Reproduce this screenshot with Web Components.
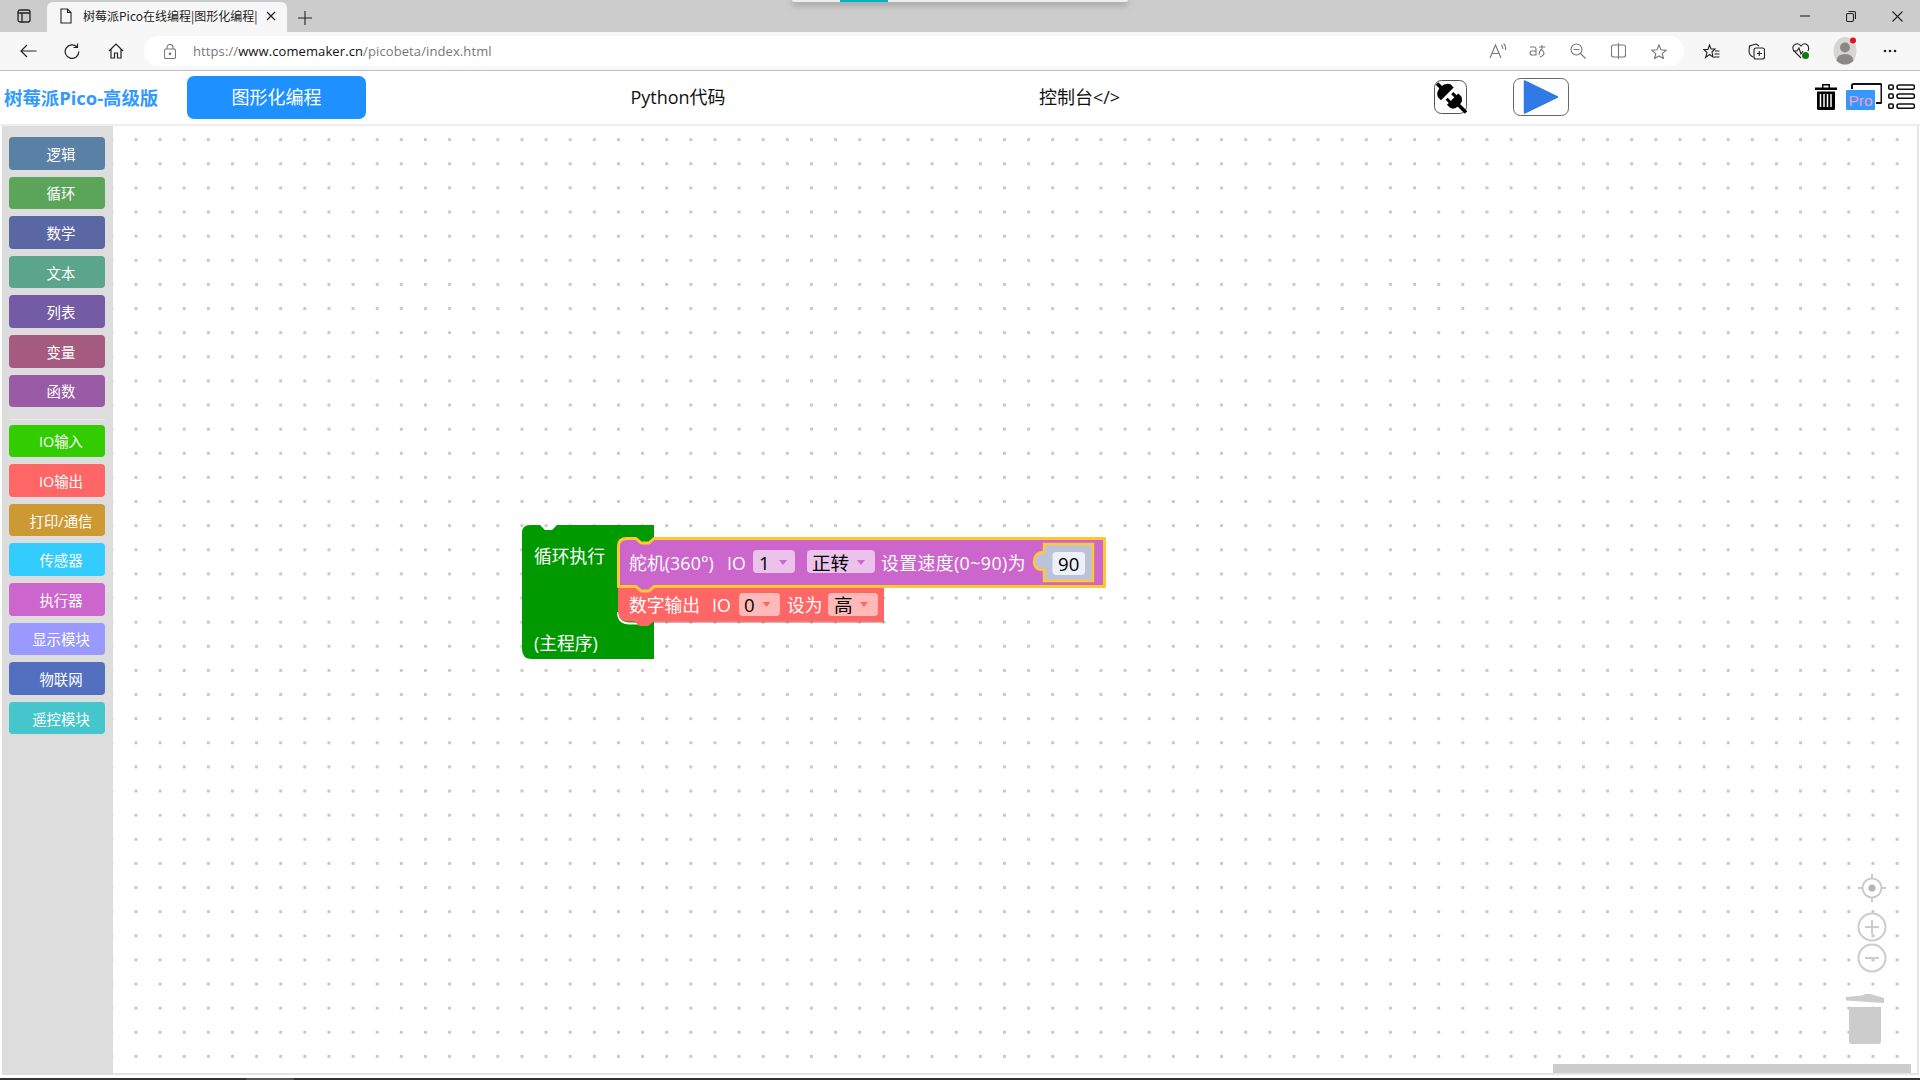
<!DOCTYPE html>
<html lang="zh-CN">
<head>
<meta charset="utf-8">
<title>树莓派Pico在线编程</title>
<style>
  html, body { margin: 0; padding: 0; height: 100%; background: #fff; overflow: hidden; }
  body { display: flex; flex-direction: column; width: 1920px; height: 1080px; font-family: "Open Sans", "Noto Sans CJK SC", sans-serif; }
  .workspace-row { display: flex; height: 949px; }
</style>
</head>
<body>
<browser-chrome></browser-chrome>
<app-header></app-header>
<div class="workspace-row">
  <toolbox-panel>
    <toolbox-item color="#5b80a5">逻辑</toolbox-item>
    <toolbox-item color="#5ba55b">循环</toolbox-item>
    <toolbox-item color="#5b67a5">数学</toolbox-item>
    <toolbox-item color="#5ba58c">文本</toolbox-item>
    <toolbox-item color="#745ba5">列表</toolbox-item>
    <toolbox-item color="#a55b80">变量</toolbox-item>
    <toolbox-item color="#995ba5">函数</toolbox-item>
    <toolbox-divider></toolbox-divider>
    <toolbox-item color="#33cc00">IO输入</toolbox-item>
    <toolbox-item color="#ff6666">IO输出</toolbox-item>
    <toolbox-item color="#cc9933">打印/通信</toolbox-item>
    <toolbox-item color="#33ccff">传感器</toolbox-item>
    <toolbox-item color="#cc66cc">执行器</toolbox-item>
    <toolbox-item color="#9999ff">显示模块</toolbox-item>
    <toolbox-item color="#5370c0">物联网</toolbox-item>
    <toolbox-item color="#45c5cc">遥控模块</toolbox-item>
  </toolbox-panel>
  <block-canvas>
    <block-stack></block-stack>
    <canvas-controls></canvas-controls>
  </block-canvas>
</div>
<task-bar></task-bar>

<script>
// Browser window frame: tab strip and address bar
class BrowserChrome extends HTMLElement {
    constructor() {
        super();
        this.attachShadow({ mode: 'open' });
        this.shadowRoot.innerHTML = `
            <style>
                :host { display: block; height: 71px; position: relative; font-family: "Open Sans", "Noto Sans CJK SC", sans-serif; flex: none; }
                svg { display: block; fill: none; stroke: #222; stroke-width: 1.1; flex: none; }
                .strip { height: 32px; background: #ccc; display: flex; align-items: flex-end; box-sizing: border-box; }
                .strip .side { width: 47px; height: 32px; display: flex; align-items: center; justify-content: center; }
                .tab { width: 240px; height: 30px; background: #f7f7f7; border-radius: 6px 6px 0 0; display: flex; align-items: center; box-sizing: border-box; padding: 0 0 3px 13px; }
                .tab span { width: 174px; margin-left: 11px; font-size: 12px; color: #222; white-space: nowrap; font-family: "Noto Sans CJK SC", sans-serif; }
                .tab .x { margin-left: 9px; }
                .plus { margin: 0 0 7px 11px; }
                .win { margin-left: auto; height: 32px; display: flex; align-items: center; }
                .win div { width: 46px; display: flex; justify-content: center; }
                .bar { height: 38px; background: #f7f7f7; border-bottom: 1px solid #c0c0c0; display: flex; align-items: center; }
                .nav { width: 44px; display: flex; justify-content: center; }
                .bar .first { margin-left: 6px; }
                .omni { width: 1540px; height: 30px; margin-left: 6px; background: #fff; border-radius: 15px; display: flex; align-items: center; box-sizing: border-box; padding-left: 20px; }
                .url { margin-left: 17px; font-size: 13px; color: #777; letter-spacing: .1px; }
                .url b { font-weight: 400; color: #111; }
                .right { margin-left: auto; display: flex; align-items: center; margin-right: 5px; }
                .right div { width: 40.3px; display: flex; justify-content: center; }
                .tools { display: flex; align-items: center; margin-left: 5px; }
                .tools div { width: 44.7px; display: flex; justify-content: center; }
                .gray { stroke: #777; }
                .flash { position: absolute; left: 792px; top: 0; width: 336px; height: 1.5px; background: #eee; box-shadow: 0 2px 6px rgba(0,0,0,.55); border-radius: 0 0 4px 4px; }
                .flash i { display: block; margin-left: 48px; width: 48px; height: 1.5px; background: #00b4c8; }
            </style>
            <div class="strip">
                <div class="side">
                    <svg width="14" height="14" viewBox="0 0 14 14"><rect x="1" y="1" width="12" height="12" rx="2" stroke-width="1.3"/><path d="M1 4H13M5 4V13" stroke-width="1.3"/></svg>
                </div>
                <div class="tab">
                    <svg width="12" height="16" viewBox="0 0 12 16"><path d="M1 1H7.5L11 4.5V15H1Z"/><path d="M7.5 1V4.5H11"/></svg>
                    <span>树莓派Pico在线编程|图形化编程|</span>
                    <svg class="x" width="10" height="10" viewBox="0 0 10 10"><path d="M1 1L9 9M9 1L1 9" stroke-width="1.3"/></svg>
                </div>
                <svg class="plus" width="14" height="14" viewBox="0 0 14 14"><path d="M7 0V14M0 7H14"/></svg>
                <div class="win">
                    <div><svg width="10" height="10" viewBox="0 0 10 10"><path d="M0 5H10"/></svg></div>
                    <div><svg width="10" height="11" viewBox="0 0 10 11"><rect x=".5" y="2.5" width="7" height="8" rx="1.5"/><path d="M2.5 .5H8Q9.5 .5 9.5 2V8"/></svg></div>
                    <div><svg width="11" height="11" viewBox="0 0 11 11"><path d="M.5 .5L10.5 10.5M10.5 .5L.5 10.5"/></svg></div>
                </div>
            </div>
            <div class="bar">
                <div class="nav first"><svg width="17" height="14" viewBox="0 0 17 14"><path d="M16.5 7H1M7 1L1 7L7 13" stroke-width="1.2"/></svg></div>
                <div class="nav"><svg width="16" height="16" viewBox="0 0 16 16"><path d="M13 4A6.8 6.8 0 1 0 14.8 8.5M13.5 .5V4.5H9.5" stroke-width="1.2"/></svg></div>
                <div class="nav"><svg width="16" height="16" viewBox="0 0 16 16"><path d="M1 8L8 1L15 8M3 6.5V15H6.5V10H9.5V15H13V6.5" stroke-width="1.2"/></svg></div>
                <div class="omni">
                    <svg class="gray" width="12" height="15" viewBox="0 0 12 15"><rect x=".5" y="5" width="11" height="9.5" rx="1.5"/><path d="M3 5V3.5A3 3 0 0 1 9 3.5V5"/><circle cx="6" cy="9.8" r=".8" fill="#777"/></svg>
                    <div class="url">https://<b>www.comemaker.cn</b>/picobeta/index.html</div>
                    <div class="right">
                        <div><svg class="gray" width="18" height="16" viewBox="0 0 18 16"><path d="M1 15L6.5 2L12 15M3 10.5H10M12 2Q14 3 14 6M14.5 .5Q17 2.5 16.5 7"/></svg></div>
                        <div><svg class="gray" width="18" height="14" viewBox="0 0 18 14"><path d="M1 3H5.5Q7 3 7 5V11H3Q1 11 1 9T3 7H7M10 3H16.5M13 1V5M11 13Q17 11 14 7T10 11"/></svg></div>
                        <div><svg class="gray" width="16" height="16" viewBox="0 0 16 16"><circle cx="6.5" cy="6.5" r="5.5"/><path d="M3.5 6.5H9.5M10.5 10.5L15.5 15.5"/></svg></div>
                        <div><svg class="gray" width="15" height="16" viewBox="0 0 15 16"><rect x=".5" y="2" width="14" height="12" rx="2"/><path d="M7.5 0V16"/></svg></div>
                        <div><svg class="gray" width="16" height="15" viewBox="0 0 16 15"><path d="M8 1L10 5.8L15.2 6.2L11.2 9.6L12.5 14.6L8 12L3.5 14.6L4.8 9.6L.8 6.2L6 5.8Z"/></svg></div>
                    </div>
                </div>
                <div class="tools">
                    <div><svg width="17" height="15" viewBox="0 0 17 15"><path d="M6.5 1L8 5H12L9 8L10 13L6.5 10.5L2.5 13.5L4 8.5L.8 5.5H5ZM12 7H16.5M11.5 10H16.5M11 13H16.5"/></svg></div>
                    <div><svg width="17" height="17" viewBox="0 0 17 17"><rect x="6" y="5" width="10.5" height="11" rx="2"/><path d="M9 10.5H14M11.3 8V13M5 14Q1 12 1 8L1.5 3L8 1L11 3"/></svg></div>
                    <div><svg width="18" height="18" viewBox="0 0 18 18"><path d="M9 16L2 9Q-1 4 4 2Q7 1 9 4Q11 1 14 2Q18 4 16 9M1 9H5L7 6L9 12L11 9"/><circle cx="13.5" cy="13.5" r="3.5" fill="#107c10" stroke="none"/></svg></div>
                    <div><svg width="24" height="28" viewBox="0 0 24 28" style="stroke:none"><ellipse cx="12" cy="14" rx="11.5" ry="14" fill="#d8d6d3"/><circle cx="12" cy="10.5" r="5" fill="#8b8986"/><path d="M3.5 24Q4 17 12 17T20.5 24Q12 31 3.5 24Z" fill="#8b8986"/><circle cx="20" cy="3.5" r="3" fill="#e81123"/></svg></div>
                    <div><svg width="14" height="4" viewBox="0 0 14 4" style="stroke:none"><circle cx="2" cy="2" r="1.3" fill="#222"/><circle cx="7" cy="2" r="1.3" fill="#222"/><circle cx="12" cy="2" r="1.3" fill="#222"/></svg></div>
                </div>
            </div>
            <div class="flash"><i></i></div>
        `;
    }
}

// Application header with the three tabs and the tool icons
class AppHeader extends HTMLElement {
    constructor() {
        super();
        this.attachShadow({ mode: 'open' });
        this.shadowRoot.innerHTML = `
            <style>
                :host { display: flex; align-items: center; height: 55px; box-sizing: border-box; border-bottom: 2px solid #eee; padding: 0 0 0 4px; font-family: "Open Sans", "Noto Sans CJK SC", sans-serif; font-size: 18px; flex: none; }
                svg { display: block; flex: none; }
                .logo { width: 183px; color: #3399ff; font-weight: 700; font-size: 18.4px; white-space: nowrap; padding-bottom: 2px; }
                .tab { width: 179px; height: 43px; box-sizing: border-box; padding-bottom: 3px; display: flex; align-items: center; justify-content: center; border-radius: 7px; color: #111; margin-right: 222.5px; white-space: nowrap; }
                .tab.active { background: #1e90ff; color: #fff; }
                .tab.last { margin-right: 0; }
                .plug { margin-left: 265px; margin-top: -2px; }
                .play { margin-left: 46px; margin-top: -2px; }
                .tools { margin-left: auto; display: flex; align-items: center; margin-right: 5px; margin-top: -2px; }
                .pro { margin-left: 9px; }
                .list { margin-left: 6px; }
                text { font-family: "Liberation Sans", sans-serif; }
            </style>
            <div class="logo">树莓派Pico-高级版</div>
            <div class="tab active">图形化编程</div>
            <div class="tab">Python代码</div>
            <div class="tab last">控制台&lt;/&gt;</div>
            <svg class="plug" width="33" height="34" viewBox="0 0 33 34">
                <rect x=".5" y=".5" width="32" height="33" rx="7" fill="#fff" stroke="#555"/>
                <g transform="translate(16.5 17) rotate(45)" fill="#000">
                    <path d="M-4.5 -9V9H-9Q-14 7 -14 0T-9 -9Z"/>
                    <rect x="-19" y="-1.8" width="6" height="3.6"/>
                    <rect x="-1.5" y="-5.5" width="5" height="3"/>
                    <rect x="-1.5" y="2.5" width="5" height="3"/>
                    <path d="M3 -8H7Q12 -7 12 0T7 8H3Z"/>
                    <rect x="10" y="-1.8" width="12" height="3.6"/>
                </g>
            </svg>
            <svg class="play" width="56" height="38" viewBox="0 0 56 38">
                <rect x=".5" y=".5" width="55" height="37" rx="7" fill="#fff" stroke="#666"/>
                <path d="M11.5 3L44.5 19L11.5 35Z" fill="#2f7ae5" stroke="#2f7ae5" stroke-width="1.5" stroke-linejoin="round"/>
            </svg>
            <div class="tools">
                <svg width="22" height="27" viewBox="0 0 22 27">
                    <path d="M0 4.5H22V7H0ZM7 4.5V1H15V4.5H13.5V2.5H8.5V4.5Z" fill="#000"/>
                    <path d="M2 8.5H20V25.5Q20 27 18.5 27H3.5Q2 27 2 25.5Z" fill="#000"/>
                    <path d="M5.5 11V24M9 11V24M12.5 11V24M16 11V24" stroke="#fff" stroke-width="1.5"/>
                </svg>
                <svg class="pro" width="36" height="27" viewBox="0 0 36 27">
                    <path d="M6 6V2.5Q6 1 7.5 1H34.5Q35.5 1 35.5 2.5V19Q35.5 20 34 20H30" fill="none" stroke="#111" stroke-width="2"/>
                    <rect x="0" y="7" width="29" height="20" rx="1" fill="#3399ff"/>
                    <text x="14.5" y="22.5" text-anchor="middle" font-size="15.5" fill="#ff99cc">Pro</text>
                </svg>
                <svg class="list" width="27" height="25" viewBox="0 0 27 25" fill="#fff" stroke="#111" stroke-width="1.6">
                    <rect x=".8" y="1" width="4.4" height="4.2" rx="1"/>
                    <rect x=".8" y="10" width="4.4" height="4.2" rx="1"/>
                    <rect x=".8" y="20" width="4.4" height="4.2" rx="1"/>
                    <rect x="9" y="1" width="17.5" height="4.2" rx="2"/>
                    <rect x="9" y="10" width="17.5" height="4.2" rx="2"/>
                    <rect x="9" y="20" width="17.5" height="4.2" rx="2"/>
                </svg>
            </div>
        `;
    }
}

// Left column with the block categories
class ToolboxPanel extends HTMLElement {
    constructor() {
        super();
        this.attachShadow({ mode: 'open' });
        this.shadowRoot.innerHTML = `
            <style>
                :host { display: flex; flex-direction: column; gap: 7px; width: 111px; margin-left: 2px; box-sizing: border-box; padding: 11px 8px 0 7px; background: #ddd; flex: none; }
            </style>
            <slot></slot>
        `;
    }
}

class ToolboxItem extends HTMLElement {
    constructor() {
        super();
        this.attachShadow({ mode: 'open' });
        this.shadowRoot.innerHTML = `
            <style>
                :host { display: flex; align-items: center; justify-content: center; height: 32.6px; box-sizing: border-box; padding-left: 8px; border-radius: 4px; color: #fff; font-family: "Open Sans", "Noto Sans CJK SC", sans-serif; font-size: 14.4px; white-space: nowrap; background: var(--item-color); }
            </style>
            <slot></slot>
        `;
    }
    connectedCallback() {
        this.style.setProperty('--item-color', this.getAttribute('color'));
    }
}

class ToolboxDivider extends HTMLElement {
    constructor() {
        super();
        this.attachShadow({ mode: 'open' });
        this.shadowRoot.innerHTML = `
            <style>
                :host { display: block; height: 1px; margin: 4.5px 0 -2px; background: #e9e9e9; }
            </style>
        `;
    }
}

// Dotted workspace. The blocks and the controls float on it
class BlockCanvas extends HTMLElement {
    constructor() {
        super();
        this.attachShadow({ mode: 'open' });
        this.shadowRoot.innerHTML = `
            <style>
                :host { display: block; position: relative; flex: 1; overflow: hidden; border-right: 2px solid #e4e4e4; border-bottom: 2px solid #e4e4e4; margin-right: 1px; background-color: #fff; background-image: radial-gradient(circle, #c9c9c9 0, #c9c9c9 1.4px, transparent 2px); background-size: 24.13px 24.13px; background-position: 10.9px 1.6px; }
                .scroll { position: absolute; left: 1440px; right: 6px; top: 938px; height: 9px; background: #ccc; }
            </style>
            <slot></slot>
            <div class="scroll"></div>
        `;
    }
}

// The block program, drawn like Blockly does: paths and svg text
class BlockStack extends HTMLElement {
    constructor() {
        super();
        this.attachShadow({ mode: 'open' });
        this.shadowRoot.innerHTML = `
            <style>
                :host { display: block; position: absolute; left: 397px; top: 384px; width: 620px; height: 160px; }
                svg { display: block; overflow: visible; }
                text { font-family: "Open Sans", "Noto Sans CJK SC", sans-serif; font-size: 17.8px; fill: #fff; }
                text.val { fill: #000; font-size: 18.6px; }
            </style>
            <svg width="620" height="160" viewBox="510 510 620 160">
                <!-- loop block -->
                <path d="M530 525H540L545 530H552L557 525H654V659H532Q522 659 522 649V533Q522 525 530 525Z" fill="#009900"/>
                <text x="534" y="563">循环执行</text>
                <text x="534" y="650">(主程序)</text>

                <!-- digital output -->
                <path d="M618 612Q618 623.5 630 623.5H640" fill="none" stroke="#fff" stroke-width="2"/>
                <path d="M618 586H884V621.5H654L648 626H640L634 621.5H629Q618 621.5 618 611Z" fill="#ff6666"/>
                <path d="M654 622H884" stroke="#cc5252" stroke-width="1"/>
                <text x="629" y="612">数字输出</text>
                <text x="712" y="612">IO</text>
                <rect x="739" y="593" width="41" height="23" rx="4" fill="#ffb9b9"/>
                <text class="val" x="744" y="612">0</text>
                <path d="M762.5 602H770.5L766.5 607Z" fill="#ff6666"/>
                <text x="787" y="612">设为</text>
                <rect x="828" y="593" width="50" height="23" rx="4" fill="#ffb9b9"/>
                <text class="val" x="834" y="612">高</text>
                <path d="M860 602H868L864 607Z" fill="#ff6666"/>

                <!-- servo block, selected -->
                <path d="M618.5 546Q618.5 538.5 627 538.5H636L641 543H649L654 538.5H1104.5V586.5H654L649 591H641L636 586.5H618.5Z" fill="#cc66cc" stroke="#ffc830" stroke-width="3" stroke-linejoin="round"/>
                <text x="629" y="570" letter-spacing=".1">舵机(360°)</text>
                <text x="727" y="570">IO</text>
                <rect x="753" y="550" width="42" height="23" rx="4" fill="#ebc2eb"/>
                <text class="val" x="759" y="570">1</text>
                <path d="M779 560H787L783 565Z" fill="#cc66cc"/>
                <rect x="807" y="550" width="68" height="23" rx="4" fill="#ebc2eb"/>
                <text class="val" x="812" y="570">正转</text>
                <path d="M857 560H865L861 565Z" fill="#cc66cc"/>
                <text x="881" y="570" letter-spacing=".45">设置速度(0~90)为</text>
                <!-- number socket -->
                <path d="M1044 544H1093V581H1044V569.5Q1035 571 1034 562Q1035 551 1044 552.5Z" fill="#bcc3d9" stroke="#ffc830" stroke-width="2.5"/>
                <rect x="1052.5" y="552" width="32.5" height="23" rx="4" fill="#edf0f7"/>
                <text class="val" x="1058" y="570.5">90</text>
            </svg>
        `;
    }
}

// Zoom buttons and the recycle bin at the bottom right
class CanvasControls extends HTMLElement {
    constructor() {
        super();
        this.attachShadow({ mode: 'open' });
        this.shadowRoot.innerHTML = `
            <style>
                :host { display: block; position: absolute; left: 1730px; top: 740px; width: 44px; height: 190px; }
                svg { display: block; overflow: visible; }
            </style>
            <svg width="44" height="190" viewBox="1843 866 44 190" fill="none" stroke="#ccc" stroke-width="2">
                <circle cx="1872" cy="888" r="9.5"/>
                <path d="M1872 874V879M1872 897V902M1858 888H1863M1881 888H1886"/>
                <circle cx="1872" cy="888" r="3.5" fill="#b5b5b5" stroke="none"/>
                <circle cx="1872" cy="927" r="13.5"/>
                <path d="M1872 920V934M1865 927H1879"/>
                <circle cx="1872" cy="958" r="13.5"/>
                <path d="M1865 958H1879"/>
                <path d="M1846 997L1862 995.5Q1866 993 1874 995L1884 998V1003L1846 1000.5Z" fill="#ccc" stroke="none"/>
                <path d="M1849 1007H1881V1041Q1881 1044 1878 1044H1852Q1849 1044 1849 1041Z" fill="#ccc" stroke="none"/>
            </svg>
        `;
    }
}

class TaskBar extends HTMLElement {
    constructor() {
        super();
        this.attachShadow({ mode: 'open' });
        this.shadowRoot.innerHTML = `
            <style>
                :host { display: block; height: 2px; margin-top: 3px; background: #333; flex: none; }
                div { width: 48px; height: 2px; margin-left: 246px; background: #555; }
            </style>
            <div></div>
        `;
    }
}

customElements.define('browser-chrome', BrowserChrome);
customElements.define('app-header', AppHeader);
customElements.define('toolbox-panel', ToolboxPanel);
customElements.define('toolbox-item', ToolboxItem);
customElements.define('toolbox-divider', ToolboxDivider);
customElements.define('block-canvas', BlockCanvas);
customElements.define('block-stack', BlockStack);
customElements.define('canvas-controls', CanvasControls);
customElements.define('task-bar', TaskBar);
</script>
</body>
</html>
